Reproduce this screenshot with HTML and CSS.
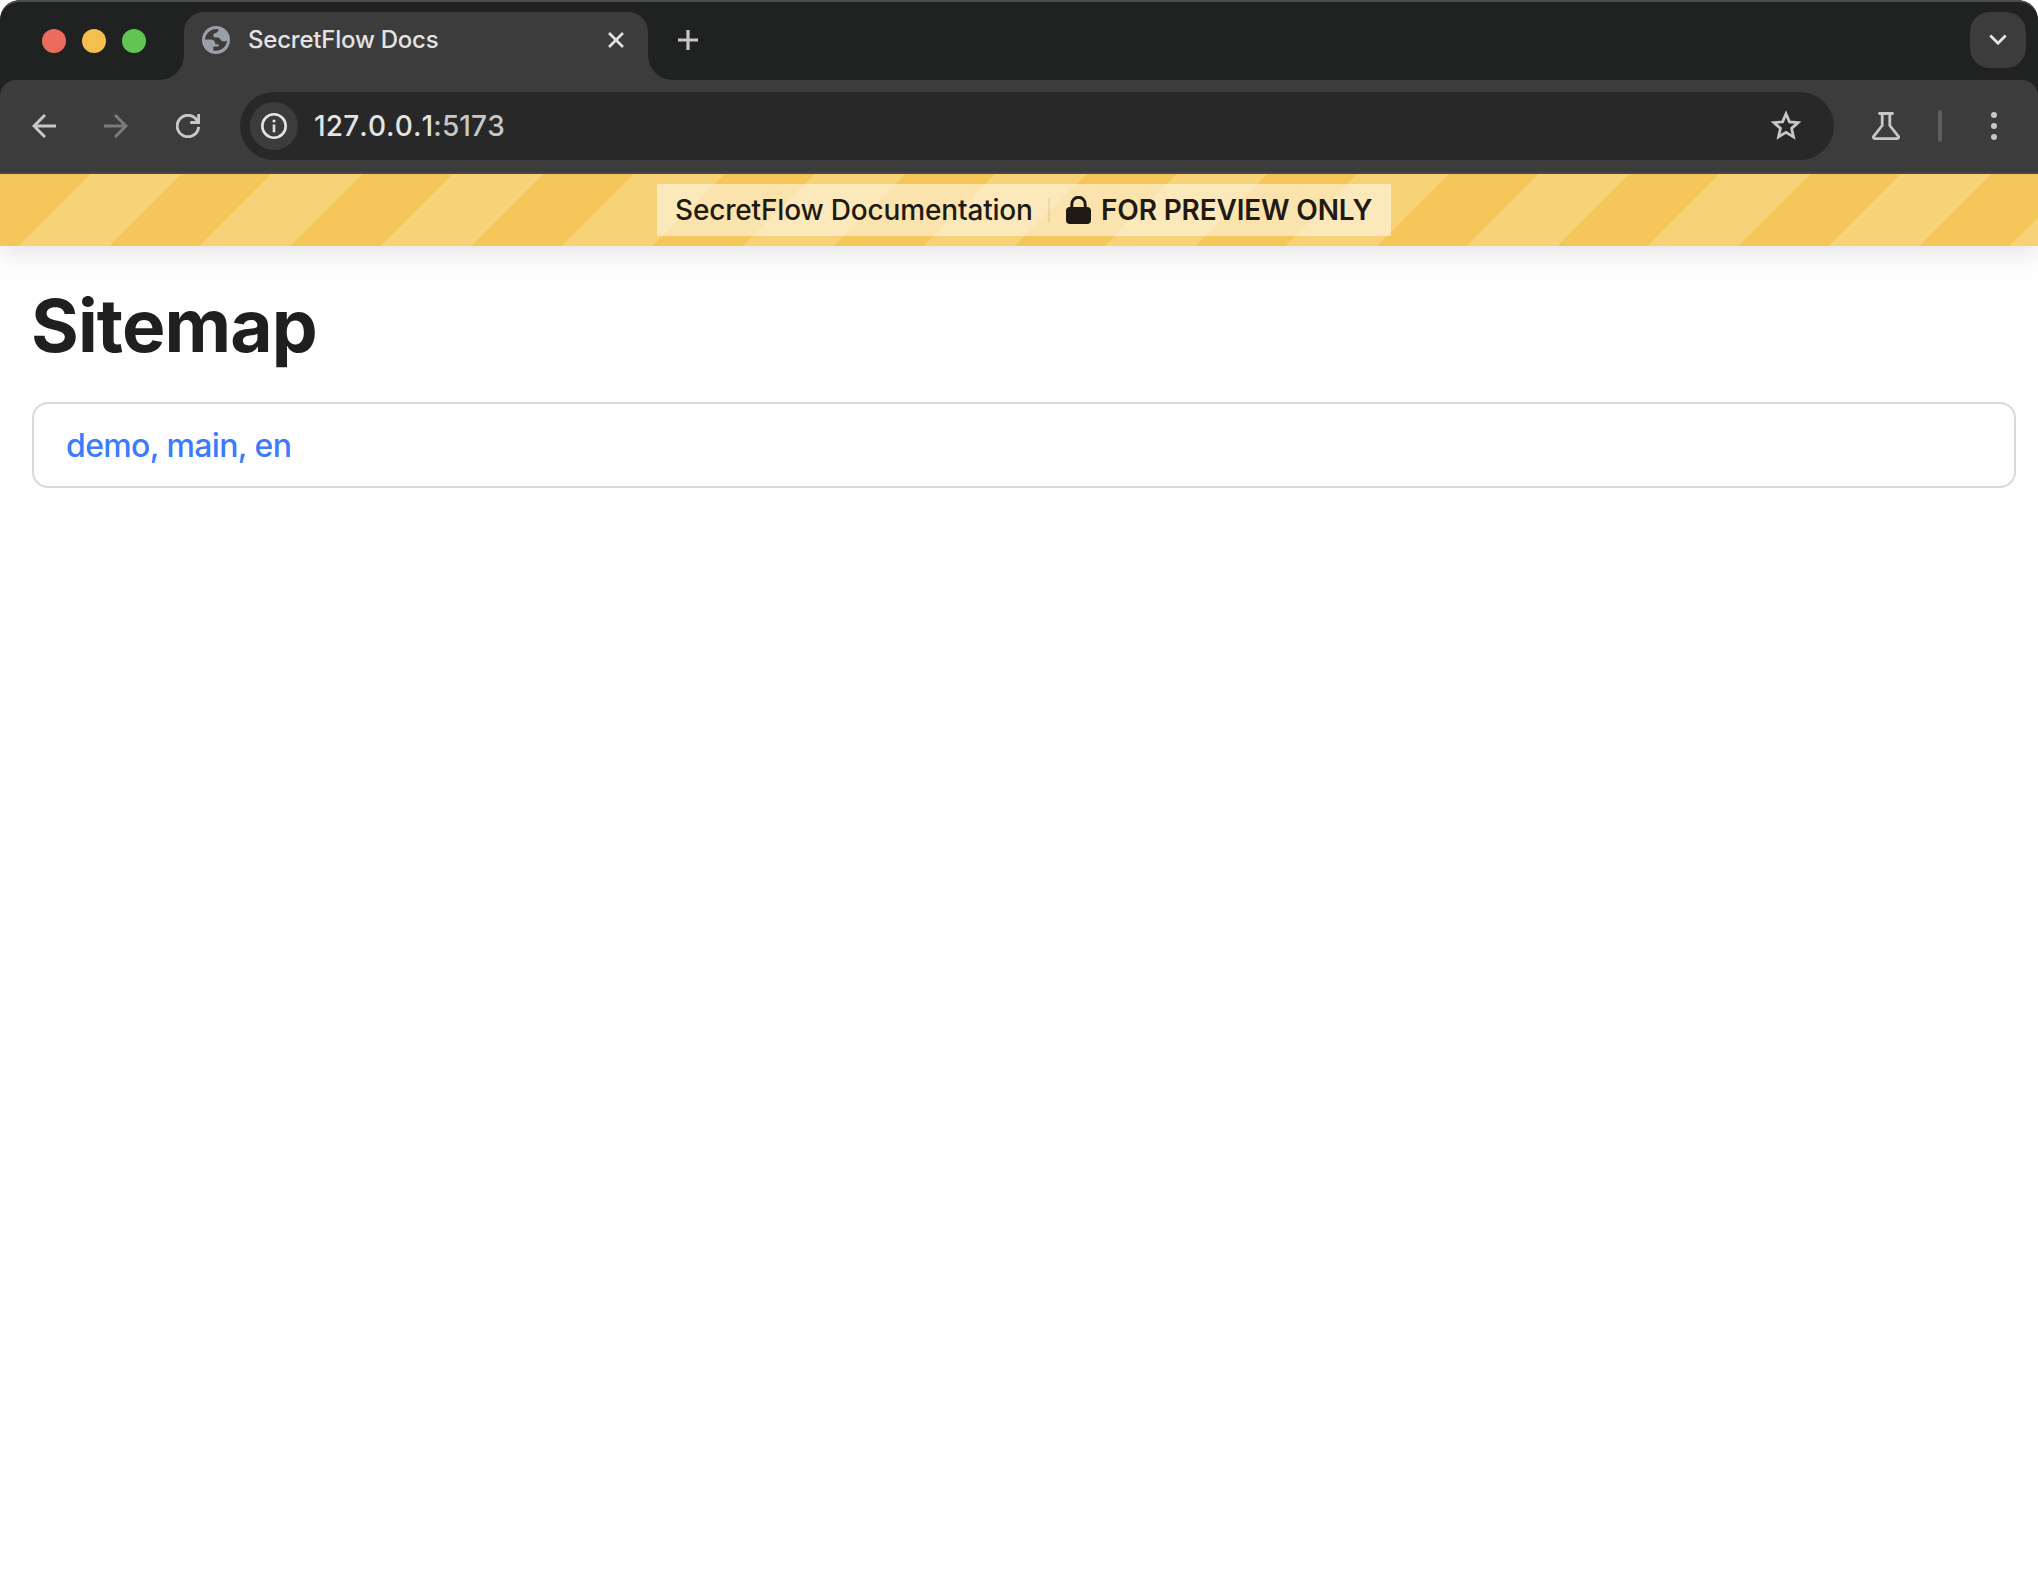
FILE: index.html
```html
<!DOCTYPE html>
<html lang="en">
<head>
<meta charset="utf-8">
<title>SecretFlow Docs</title>
<link rel="stylesheet" href="styles.css">
</head>
<body>
<div class="window">
  <header class="tab-strip">
    <div class="lights">
      <span class="light light-close"></span>
      <span class="light light-min"></span>
      <span class="light light-max"></span>
    </div>
    <div class="tab">
      <svg class="favicon" viewBox="0 0 28 28" width="28" height="28">
        <circle cx="14" cy="14" r="14" fill="#9b9fa8"/>
        <path d="M16.3 3.2C10 2 3.6 6.500 3 13.600H8.500C11 13.600 13.300 15 13.300 17.400V18.200H15.500C16.700 18.200 17.200 19 16.700 19.900C16.200 20.900 13.800 20 11.300 20.700V24.600C18 26 24.500 21.500 25 14.600C23.800 15.900 22.500 15.400 21 15.300C18.500 15.300 18.600 12.200 16.300 11.500C14.500 11.300 12.300 12 11.500 10.600C10.700 8.800 11.800 7.200 13.500 6.900C15.500 6.600 16.500 5.500 16.300 3.200Z" fill="#3c3c3c"/>
      </svg>
      <span class="tab-title">SecretFlow Docs</span>
      <svg class="tab-close" viewBox="0 0 16 16" width="16" height="16"><path d="M1 1L15 15M15 1L1 15" stroke="#e3e3e3" stroke-width="2.700" fill="none"/></svg>
    </div>
    <svg class="new-tab" viewBox="0 0 20 20" width="20" height="20"><path d="M10 0V20M0 10H20" stroke="#c7c7c7" stroke-width="3.200" fill="none"/></svg>
    <div class="tab-search">
      <svg viewBox="0 0 18 12" width="18" height="12"><path d="M1.300 1.500L9 9.200L16.700 1.500" stroke="#e3e3e3" stroke-width="2.800" fill="none"/></svg>
    </div>
  </header>
  <nav class="toolbar">
    <svg class="back" viewBox="0 0 24 24" width="24" height="24"><path d="M24 12H2M13 1L2 12L13 23" stroke="#c7c7c7" stroke-width="3" fill="none"/></svg>
    <svg class="forward" viewBox="0 0 24 24" width="24" height="24"><path d="M0 12H22M11 1L22 12L11 23" stroke="#7b7b7b" stroke-width="3" fill="none"/></svg>
    <svg class="reload" viewBox="0 0 24 24" width="24" height="24"><path d="M22.600 12.800A10.700 10.700 0 1 1 20.400 5.500L23 8.500M22.700 0V8.500H14.300" stroke="#c7c7c7" stroke-width="2.900" fill="none"/></svg>
    <div class="omnibox">
      <span class="site-info">
        <svg viewBox="0 0 26 26" width="26" height="26"><circle cx="13" cy="13" r="11.700" stroke="#e3e3e3" stroke-width="2.600" fill="none"/><path d="M13 11.500V19.300" stroke="#e3e3e3" stroke-width="2.600"/><circle cx="13" cy="8" r="1.600" fill="#e3e3e3"/></svg>
      </span>
      <span class="url">127.0.0.1<span class="port">:5173</span></span>
      <svg class="star" viewBox="0 0 32 32" width="32" height="32"><path d="M16 4.300L19.200 11.800L27.300 12.500L21.200 17.900L23 25.900L16 21.700L9 25.900L10.800 17.900L4.700 12.500L12.800 11.800Z" transform="translate(-1.100 -.8) scale(1.070)" stroke="#c7c7c7" stroke-width="2.600" fill="none"/></svg>
    </div>
    <svg class="flask" viewBox="0 0 28 28" width="28" height="28"><path d="M7.500 1.500H20.500M10.200 1.500V13.500L2 23.800C.7 25.300 1.400 26.600 3 26.600H25C26.600 26.600 27.300 25.300 26 23.800L17.800 13.500V1.500" stroke="#c7c7c7" stroke-width="2.800" stroke-linecap="round" stroke-linejoin="round" fill="none"/></svg>
    <span class="divider"></span>
    <svg class="menu" viewBox="0 0 6 28" width="6" height="28"><g fill="#c7c7c7"><circle cx="3" cy="3" r="3"/><circle cx="3" cy="14" r="3"/><circle cx="3" cy="25" r="3"/></g></svg>
  </nav>
  <div class="banner">
    <div class="notice">
      <span class="notice-name">SecretFlow Documentation</span>
      <span class="notice-rule"></span>
      <svg class="lock" viewBox="0 0 25 28" width="25" height="28"><path d="M5.800 13V8.200A6.700 7 0 0 1 19.200 8.200V13" stroke="#1f1a14" stroke-width="2.900" fill="none"/><rect y="11" width="25" height="17" rx="4" fill="#1f1a14"/></svg>
      <strong class="notice-flag">FOR PREVIEW ONLY</strong>
    </div>
  </div>
  <main class="page">
    <h1 class="title">Sitemap</h1>
    <div class="card"><a class="link">demo, main, en</a></div>
  </main>
</div>
</body>
</html>
```
FILE: styles.css
```css
* { box-sizing: border-box; }
body { margin: 0; background: #fff; font-family: Inter, "Liberation Sans", sans-serif; }
svg { display: block; flex: none; }
span, a, strong { white-space: nowrap; }
.window { height: 1576px; border-radius: 20px 20px 0 0; overflow: hidden; display: flex; flex-direction: column; background: linear-gradient(#202221 100px, #fefefe 100px); }

.tab-strip { height: 80px; flex: none; border-top: 2px solid #4b4d4c; border-radius: 20px 20px 0 0; background: #202221; display: flex; align-items: flex-start; padding: 10px 12px 0 42px; }
.lights { display: flex; gap: 16px; margin-top: 17px; width: 142px; }
.light { width: 24px; height: 24px; border-radius: 50%; }
.light-close { background: #ed6a5e; }
.light-min { background: #f5bf4f; }
.light-max { background: #61c554; }
.tab { position: relative; width: 464px; height: 68px; border-radius: 20px 20px 0 0; background: #3c3c3c; display: flex; align-items: flex-start; padding: 14px 24px 0 18px; }
.tab::before, .tab::after { content: ""; position: absolute; bottom: 0; width: 24px; height: 24px; }
.tab::before { left: -24px; background: radial-gradient(circle at 0 0, transparent 23.500px, #3c3c3c 24px); }
.tab::after { right: -24px; background: radial-gradient(circle at 100% 0, transparent 23.500px, #3c3c3c 24px); }
.tab-title { margin-left: 18px; font-size: 24px; line-height: 28px; font-weight: 450; letter-spacing: -.22px; color: #e3e3e3; flex: 1; }
.tab-close { margin-top: 6px; }
.new-tab { margin: 18px 0 0 30px; }
.tab-search { margin-left: auto; width: 56px; height: 56px; border-radius: 20px; background: #3c3c3c; display: flex; align-items: center; justify-content: center; }

.toolbar { position: relative; z-index: 2; height: 94px; flex: none; border-radius: 16px 16px 0 0; border-bottom: 2px solid #474747; background: #3c3c3c; display: flex; align-items: center; padding: 0 41px 0 32px; }
.forward { margin-left: 48px; }
.reload { margin-left: 48px; }
.omnibox { margin-left: 40px; width: 1594px; height: 68px; border-radius: 34px; background: #282828; display: flex; align-items: center; padding: 0 32px 0 10px; }
.site-info { width: 48px; height: 48px; border-radius: 50%; background: #3c3c3c; display: flex; align-items: center; justify-content: center; }
.url { flex: 1; margin-left: 16px; font-size: 28px; line-height: 34px; font-weight: 450; font-kerning: none; letter-spacing: .13px; color: #e3e3e3; }
.port { color: #c7c7c7; }
.flask { margin-left: 38px; }
.divider { width: 4px; height: 32px; margin-left: 38px; border-radius: 2px; background: #5e5e5e; }
.menu { margin-left: 49px; }

.banner { position: relative; z-index: 1; height: 72px; flex: none; background: repeating-linear-gradient(135deg, #f5c75a 0, #f5c75a 64px, #f8d276 64px, #f8d276 128px); box-shadow: 0 8px 24px rgba(0, 0, 0, .1); display: flex; align-items: center; padding-left: 657px; }
.notice { width: 734px; height: 52px; background: rgba(255, 255, 255, .5); display: flex; align-items: center; padding-left: 18px; color: #1f1a14; font-size: 28px; line-height: 34px; }
.notice-name { width: 357px; font-weight: 500; letter-spacing: -.17px; }
.notice-rule { width: 2px; height: 24px; margin-left: 16px; background: rgba(0, 0, 0, .07); }
.lock { margin-left: 16px; }
.notice-flag { margin-left: 10px; font-weight: 600; letter-spacing: -.16px; }

.page { flex: 1; background: #fefefe; padding: 32px 22px 0 32px; }
.title { margin: 0 0 0 -1px; height: 96px; font-size: 73px; line-height: 96px; font-weight: 680; letter-spacing: -.9px; color: #1f1f1f; }
.card { margin-top: 28px; height: 86px; border: 2px solid #d9d9d9; border-radius: 16px; display: flex; align-items: center; padding: 2px 0 0 32px; }
.link { font-size: 32px; line-height: 40px; font-weight: 520; letter-spacing: -.63px; color: #3c7bfb; }
```
